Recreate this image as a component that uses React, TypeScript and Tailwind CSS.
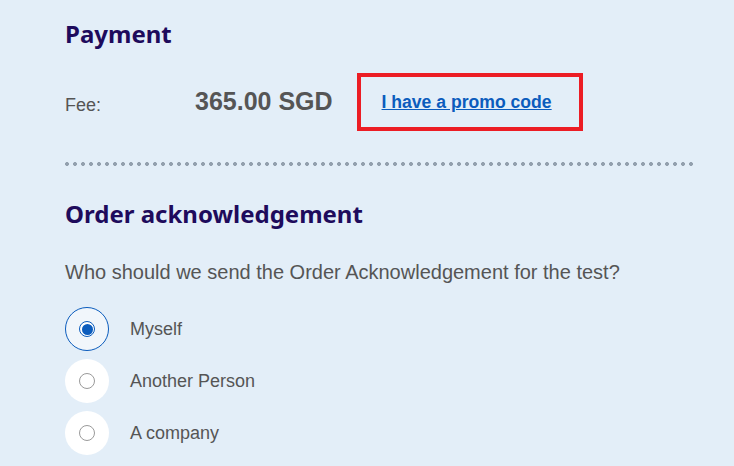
const options = [
  { id: "myself", label: "Myself", checked: true },
  { id: "another", label: "Another Person", checked: false },
  { id: "company", label: "A company", checked: false },
];

function Radio({ checked }: { checked: boolean }) {
  return (
    <span
      className={
        checked
          ? "flex h-[44px] w-[44px] items-center justify-center rounded-full border border-[#0b5cbd] bg-[#f1f6fb]"
          : "flex h-[44px] w-[44px] items-center justify-center rounded-full bg-white"
      }
    >
      {checked ? (
        <span className="flex h-[16px] w-[16px] items-center justify-center rounded-full border border-[#0b5cbd] bg-white">
          <span className="h-[11px] w-[11px] rounded-full bg-[#0b5cbd]" />
        </span>
      ) : (
        <span className="h-[16px] w-[16px] rounded-full border border-[#9a9a9a] bg-white" />
      )}
    </span>
  );
}

export default function App() {
  return (
    <div className="min-h-[466px] w-[734px] bg-[#e3eef8] pl-[65px] pr-[38px] pt-[18px] font-['Liberation_Sans',Arial,sans-serif] text-[#555]">
      {/* Payment */}
      <h2 className="font-['Noto_Sans',sans-serif] text-[24px] font-bold leading-[32px] text-[#1e0b5c]">
        Payment
      </h2>
      <div className="mt-[23px] flex items-center">
        <span className="w-[130px] pt-[6px] text-[18px]">Fee:</span>
        <span className="text-[25px] font-bold text-[#555]">365.00 SGD</span>
        <div className="ml-[24px] flex h-[58px] w-[226px] items-center justify-center border-4 border-[#ec1c24]">
          <a href="#" className="mr-[6px] text-[17.6px] font-bold text-[#0b5cbd] underline">
            I have a promo code
          </a>
        </div>
      </div>

      {/* Divider */}
      <div className="mt-[31px] h-[4px] w-[632px] bg-[radial-gradient(circle,#93a0ae_1.8px,transparent_2.2px)] bg-[length:8px_4px] bg-[position:-2px_0]" />

      {/* Order acknowledgement */}
      <h2 className="mt-[32px] font-['Noto_Sans',sans-serif] text-[24px] font-bold leading-[32px] text-[#1e0b5c]">
        Order acknowledgement
      </h2>
      <p className="mt-[29px] text-[20px] leading-[26px]">
        Who should we send the Order Acknowledgement for the test?
      </p>
      <div className="mt-[22px] flex flex-col gap-[8px]">
        {options.map((o) => (
          <label key={o.id} className="flex items-center gap-[21px] text-[18px]">
            <Radio checked={o.checked} />
            {o.label}
          </label>
        ))}
      </div>
    </div>
  );
}
